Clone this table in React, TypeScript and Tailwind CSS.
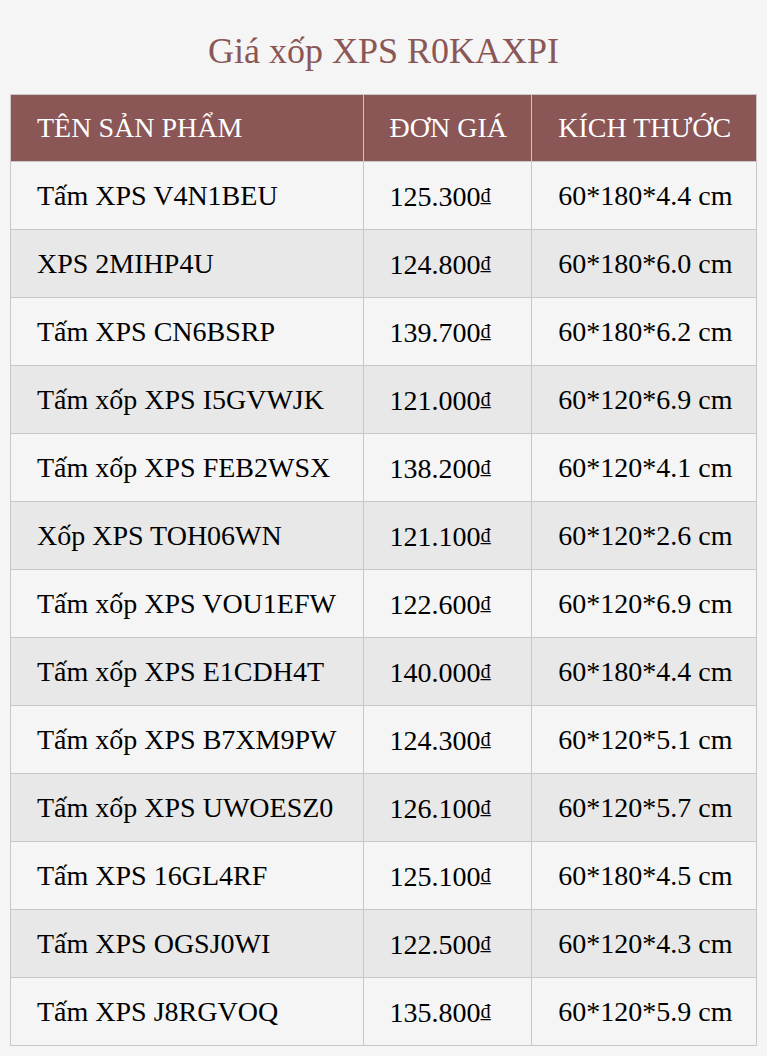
import React from "react";

const rows: [string, string, string][] = [
  ["Tấm XPS V4N1BEU", "125.300", "60*180*4.4 cm"],
  ["XPS 2MIHP4U", "124.800", "60*180*6.0 cm"],
  ["Tấm XPS CN6BSRP", "139.700", "60*180*6.2 cm"],
  ["Tấm xốp XPS I5GVWJK", "121.000", "60*120*6.9 cm"],
  ["Tấm xốp XPS FEB2WSX", "138.200", "60*120*4.1 cm"],
  ["Xốp XPS TOH06WN", "121.100", "60*120*2.6 cm"],
  ["Tấm xốp XPS VOU1EFW", "122.600", "60*120*6.9 cm"],
  ["Tấm xốp XPS E1CDH4T", "140.000", "60*180*4.4 cm"],
  ["Tấm xốp XPS B7XM9PW", "124.300", "60*120*5.1 cm"],
  ["Tấm xốp XPS UWOESZ0", "126.100", "60*120*5.7 cm"],
  ["Tấm XPS 16GL4RF", "125.100", "60*180*4.5 cm"],
  ["Tấm XPS OGSJ0WI", "122.500", "60*120*4.3 cm"],
  ["Tấm XPS J8RGVOQ", "135.800", "60*120*5.9 cm"],
];

export default function App() {
  return (
    <div className="min-h-screen bg-[#f5f5f5] px-[10px] font-['Liberation_Serif','Times_New_Roman',serif]">
      <h1 className="pt-[28px] pb-[20px] text-center text-[36px] leading-[46px] text-[#8a5656]">
        Giá xốp XPS R0KAXPI
      </h1>
      <table className="w-full border-collapse border border-[#c8c8c8] text-[28px] leading-[32px] whitespace-nowrap">
        <colgroup>
          <col className="w-[353px]" />
          <col className="w-[169px]" />
          <col className="w-[225px]" />
        </colgroup>
        <thead>
          <tr className="h-[67px] bg-[#8a5656] text-white">
            <th className="border border-[#c8c8c8] pl-[26px] pr-[20px] text-left font-normal">TÊN SẢN PHẨM</th>
            <th className="border border-[#c8c8c8] pl-[26px] pr-[20px] text-left font-normal">ĐƠN GIÁ</th>
            <th className="border border-[#c8c8c8] pl-[26px] pr-[20px] text-left font-normal">KÍCH THƯỚC</th>
          </tr>
        </thead>
        <tbody>
          {rows.map((r, i) => (
            <tr key={i} className={`h-[68px] text-black ${i % 2 === 1 ? "bg-[#e8e8e8]" : "bg-[#f5f5f5]"}`}>
              <td className="border border-[#c8c8c8] pl-[26px] pr-[20px]">{r[0]}</td>
              <td className="border border-[#c8c8c8] pl-[26px] pr-[20px]">
                {r[1]}
                <span className="text-[20px] align-[4px]">₫</span>
              </td>
              <td className="border border-[#c8c8c8] pl-[26px] pr-[20px]">{r[2]}</td>
            </tr>
          ))}
        </tbody>
      </table>
    </div>
  );
}
